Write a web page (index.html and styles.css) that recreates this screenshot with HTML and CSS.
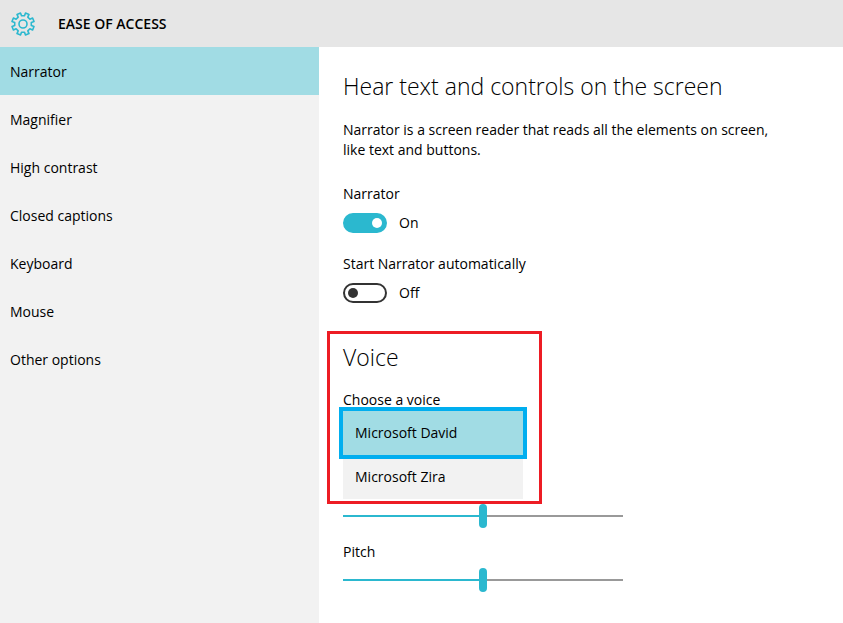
FILE: index.html
```html
<!DOCTYPE html>
<html lang="en">

<head>
    <meta charset="UTF-8">
    <meta name="viewport" content="width=device-width, initial-scale=1.0">
    <title>Ease of Access</title>
    <link rel="stylesheet" href="styles.css">
</head>

<body>

    <header class="header">
        <svg class="gear" width="26" height="26" viewBox="-13 -13 26 26" aria-hidden="true">
            <path d="M8.3 1.5 L11 2.5 L9.6 6 L6.9 4.8 L4.8 6.9 L6 9.6 L2.5 11 L1.5 8.3
                L-1.5 8.3 L-2.5 11 L-6 9.6 L-4.8 6.9 L-6.9 4.8 L-9.6 6 L-11 2.5 L-8.3 1.5
                L-8.3 -1.5 L-11 -2.5 L-9.6 -6 L-6.9 -4.8 L-4.8 -6.9 L-6 -9.6 L-2.5 -11 L-1.5 -8.3
                L1.5 -8.3 L2.5 -11 L6 -9.6 L4.8 -6.9 L6.9 -4.8 L9.6 -6 L11 -2.5 L8.3 -1.5 Z" />
            <circle r="4" />
        </svg>
        <h1>EASE OF ACCESS</h1>
    </header>

    <div class="layout">
        <nav class="sidebar">
            <a class="active" href="#narrator">Narrator</a>
            <a href="#magnifier">Magnifier</a>
            <a href="#contrast">High contrast</a>
            <a href="#captions">Closed captions</a>
            <a href="#keyboard">Keyboard</a>
            <a href="#mouse">Mouse</a>
            <a href="#other">Other options</a>
        </nav>

        <main class="content">
            <h2>Hear text and controls on the screen</h2>
            <p class="intro">Narrator is a screen reader that reads all the elements on screen, like text and buttons.</p>

            <div class="setting">
                <label for="narratorSwitch">Narrator</label>
                <div class="switch-row">
                    <input type="checkbox" class="switch" id="narratorSwitch" checked>
                    <span>On</span>
                </div>
            </div>

            <div class="setting">
                <label for="autoStart">Start Narrator automatically</label>
                <div class="switch-row">
                    <input type="checkbox" class="switch" id="autoStart">
                    <span>Off</span>
                </div>
            </div>

            <section class="voice">
                <h2>Voice</h2>
                <label for="voiceList">Choose a voice</label>
                <div class="voice-menu">
                    <select id="voiceList" size="2">
                        <option selected>Microsoft David</option>
                        <option>Microsoft Zira</option>
                    </select>
                </div>
            </section>

            <input type="range" class="slider" min="0" max="100" value="50" aria-label="Speed">
            <label class="pitch-label" for="pitch">Pitch</label>
            <input type="range" class="slider" id="pitch" min="0" max="100" value="50">
        </main>
    </div>

</body>

</html>
```
FILE: styles.css
```css
*,
*::before,
*::after {
    box-sizing: border-box;
}

body {
    margin: 0;
    min-height: 100vh;
    display: flex;
    flex-direction: column;
    background-color: #fff;
    color: #000;
    font-family: "Segoe UI", "Open Sans", sans-serif;
    font-size: 14px;
    line-height: 20px;
}

.header {
    display: flex;
    align-items: center;
    gap: 22px;
    height: 47px;
    padding: 0 10px;
    background-color: #e6e6e6;
}

.header h1 {
    margin: 0;
    font-size: 14px;
    font-weight: 600;
}

.gear {
    fill: none;
    stroke: #2bb8cf;
    stroke-width: 1.6;
    stroke-linejoin: round;
}

.layout {
    display: flex;
    flex: 1;
}

.sidebar {
    flex: 0 0 319px;
    background-color: #f2f2f2;
}

.sidebar a {
    display: block;
    padding: 15px 10px 13px;
    color: #000;
    text-decoration: none;
}

.sidebar a.active {
    background-color: #a1dce4;
}

.content {
    flex: 1;
    padding: 23px 24px;
}

h2 {
    margin: 0;
    font-size: 23px;
    font-weight: 300;
    line-height: 32px;
}

.intro {
    max-width: 440px;
    margin: 18px 0 24px;
}

label {
    display: block;
}

.setting {
    margin-bottom: 21px;
}

.switch-row {
    display: flex;
    align-items: center;
    gap: 12px;
    margin-top: 9px;
}

.switch {
    appearance: none;
    display: flex;
    align-items: center;
    width: 44px;
    height: 20px;
    margin: 0;
    padding: 0 3px;
    border: 2px solid #333;
    border-radius: 10px;
}

.switch::before {
    content: "";
    width: 10px;
    height: 10px;
    border-radius: 50%;
    background-color: #333;
}

.switch:checked {
    justify-content: flex-end;
    border-color: #2bb8cf;
    background-color: #2bb8cf;
}

.switch:checked::before {
    background-color: #fff;
}

.voice {
    width: 215px;
    margin: 28px 0 0 -16px;
    padding: 7px 16px 2px 13px;
    border: 3px solid #ed1c24;
}

.voice label {
    margin-top: 17px;
}

.voice-menu {
    position: relative;
    width: 180px;
    margin-top: 1px;
}

/* focus frame around the selected voice */
.voice-menu::after {
    content: "";
    position: absolute;
    top: -4px;
    left: -4px;
    width: 188px;
    height: 52px;
    border: 4px solid #00aeef;
    pointer-events: none;
}

.voice-menu select {
    display: block;
    width: 100%;
    height: 88px;
    padding: 0;
    border: none;
    border-radius: 0;
    outline: none;
    overflow: hidden;
    background-color: #f2f2f2;
    font: inherit;
}

.voice-menu option {
    height: 44px;
    padding: 12px;
    color: #000;
    line-height: 20px;
}

.voice-menu option:checked {
    background: linear-gradient(#a1dce4, #a1dce4);
    color: #000;
}

.slider {
    appearance: none;
    display: block;
    width: 100%;
    max-width: 280px;
    height: 24px;
    margin: 0;
    background: linear-gradient(to right, #2bb8cf 50%, #999 50%) center / 100% 2px no-repeat;
}

.slider::-webkit-slider-thumb {
    appearance: none;
    width: 8px;
    height: 24px;
    border-radius: 4px;
    background-color: #2bb8cf;
}

.pitch-label {
    margin: 14px 0 6px;
}
```
